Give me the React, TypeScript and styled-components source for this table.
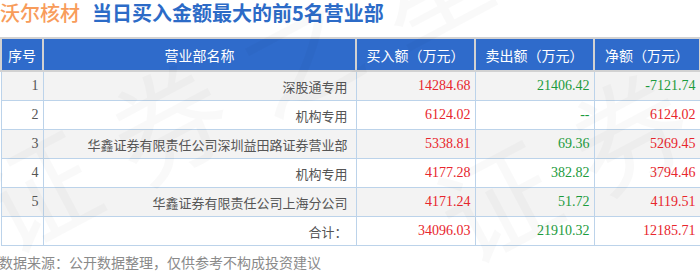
import React from 'react';
import styled, {createGlobalStyle} from 'styled-components';

const GlobalStyle = createGlobalStyle`
  body {
    margin: 0;
    background: #fff;
    font-family: "Noto Sans CJK SC", sans-serif;
  }
`;

const Page = styled.div`
  position: relative;
  width: 700px;
  height: 274px;
  overflow: hidden;
  background: #fff;
`;

const Title = styled.h1`
  margin: 0;
  height: 37px;
  display: flex;
  align-items: flex-start;
  gap: 12px;
  font-size: 20px;
  line-height: 26px;
  font-family: "Noto Sans CJK SC", sans-serif;
`;

const Stock = styled.span`
  color: #f89c5b;
  font-weight: 500;
`;

const Heading = styled.span`
  color: #2c6bc7;
  font-weight: 700;
`;

const Table = styled.table`
  width: 699px;
  table-layout: fixed;
  border-collapse: collapse;
  font-size: 13px;
  color: #555;
`;

const Th = styled.th<{w: number}>`
  width: ${p => p.w}px;
  height: 31px;
  padding: 0;
  background: #2f6bcb;
  color: #fff;
  font-weight: 400;
  font-size: 14px;
  border: 2px solid #d2d2d2;
  text-align: center;
`;

const Tr = styled.tr<{shade?: boolean}>`
  background: ${p => (p.shade ? '#f3f3f3' : '#fff')};
`;

const Td = styled.td<{tone?: 'up' | 'down'; num?: boolean}>`
  height: 28px;
  padding: 0 ${p => (p.num ? 4 : 8)}px 0 0;
  border: 1px solid #bcd3ea;
  text-align: right;
  font-family: ${p => (p.num ? '"Liberation Serif", "Noto Sans CJK SC", serif' : '"Noto Sans CJK SC", sans-serif')};
  font-size: ${p => (p.num ? 14 : 13)}px;
  color: ${p => (p.tone === 'up' ? '#e8262d' : p.tone === 'down' ? '#1c9b3d' : '#555')};
  white-space: nowrap;
`;

const Footer = styled.p`
  margin: 6px 0 0 -1px;
  font-size: 14px;
  color: #8a8a8a;
  font-family: "Noto Sans CJK SC", sans-serif;
`;

// faint "证券之星" watermark lying over the table
const Mark = styled.span<{x: number; y: number}>`
  position: absolute;
  left: ${p => p.x}px;
  top: ${p => p.y}px;
  font-size: 115px;
  line-height: 120px;
  letter-spacing: 33px;
  font-weight: 400;
  color: rgba(0, 0, 0, 0.025);
  transform: rotate(-28deg);
  white-space: nowrap;
  pointer-events: none;
  font-family: "Noto Sans CJK SC", sans-serif;
`;

type Row = {name: string; buy: string; sell: string; net: string};

const rows: Row[] = [
  {name: '深股通专用', buy: '14284.68', sell: '21406.42', net: '-7121.74'},
  {name: '机构专用', buy: '6124.02', sell: '--', net: '6124.02'},
  {name: '华鑫证券有限责任公司深圳益田路证券营业部', buy: '5338.81', sell: '69.36', net: '5269.45'},
  {name: '机构专用', buy: '4177.28', sell: '382.82', net: '3794.46'},
  {name: '华鑫证券有限责任公司上海分公司', buy: '4171.24', sell: '51.72', net: '4119.51'},
];

const toneOf = (v: string) => (v.startsWith('-') ? 'down' : 'up');

export default function App() {
  return (
    <Page>
      <GlobalStyle/>
      <Title>
        <Stock>沃尔核材</Stock>
        <Heading>当日买入金额最大的前5名营业部</Heading>
      </Title>
      <Table>
        <thead>
          <tr>
            <Th w={40}>序号</Th>
            <Th w={311}>营业部名称</Th>
            <Th w={117}>买入额（万元）</Th>
            <Th w={117}>卖出额（万元）</Th>
            <Th w={104}>净额（万元）</Th>
          </tr>
        </thead>
        <tbody>
          {rows.map((r, i) => (
            <Tr key={i} shade={i % 2 === 0}>
              <Td num>{i + 1}</Td>
              <Td>{r.name}</Td>
              <Td num tone="up">{r.buy}</Td>
              <Td num tone="down">{r.sell}</Td>
              <Td num tone={toneOf(r.net)}>{r.net}</Td>
            </Tr>
          ))}
          <Tr>
            <Td num/>
            <Td>合计：</Td>
            <Td num tone="up">34096.03</Td>
            <Td num tone="down">21910.32</Td>
            <Td num tone="up">12185.71</Td>
          </Tr>
        </tbody>
      </Table>
      <Footer>数据来源：公开数据整理，仅供参考不构成投资建议</Footer>
      <Mark x={-50} y={15}>证券之星</Mark>
      <Mark x={410} y={25}>证券之星</Mark>
    </Page>
  );
}
